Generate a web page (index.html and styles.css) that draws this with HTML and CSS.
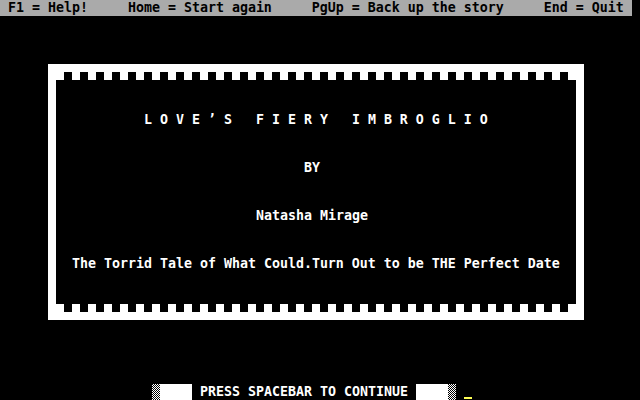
FILE: index.html
```html
<!DOCTYPE html>
<html lang="en">
<head>
<meta charset="utf-8">
<title>Love's Fiery Imbroglio</title>
<link rel="stylesheet" href="styles.css">
</head>
<body>
<div class="screen">
  <div class="bar">F1 = Help!     Home = Start again     PgUp = Back up the story     End = Quit</div>
  <div class="frame">
    <div class="teeth"></div>
    <div class="story">
      <p class="line title">L O V E ’ S   F I E R Y   I M B R O G L I O</p>
      <p class="line by">BY</p>
      <p class="line author">Natasha Mirage</p>
      <p class="line tagline">The Torrid Tale of What Could.Turn Out to be THE Perfect Date</p>
    </div>
    <div class="teeth"></div>
  </div>
  <div class="prompt">
    <span class="shade"></span><span class="block"></span><span class="msg"> PRESS SPACEBAR TO CONTINUE </span><span class="block"></span><span class="shade"></span><span class="cursor"></span>
  </div>
</div>
</body>
</html>
```
FILE: styles.css
```css
html, body {
  margin: 0;
  padding: 0;
  background: #000;
}

.screen {
  width: 640px;
  height: 400px;
  display: flex;
  flex-direction: column;
  background: #000;
  color: #fff;
  font-family: "DejaVu Sans Mono", "Liberation Mono", monospace;
  font-weight: bold;
  font-size: 13.29px;
  line-height: 16px;
  overflow: hidden;
}

.bar {
  width: 632px;
  height: 16px;
  box-sizing: border-box;
  padding-left: 8px;
  background: #aaaaaa;
  color: #000;
  white-space: pre;
}

.frame {
  box-sizing: border-box;
  width: 536px;
  height: 256px;
  margin: 48px 0 0 48px;
  border: 8px solid #fff;
  display: flex;
  flex-direction: column;
}

.teeth {
  flex: none;
  height: 8px;
  background: repeating-linear-gradient(to right, #fff 0 8px, #000 8px 16px);
}

.story {
  flex: 1;
  padding-top: 32px;
  display: flex;
  flex-direction: column;
  gap: 32px;
}

.line {
  margin: 0;
  height: 16px;
  white-space: pre;
}

.title { margin-left: 88px; }
.by { margin-left: 248px; }
.author { margin-left: 200px; }
.tagline { margin-left: 16px; }

.prompt {
  margin-top: auto;
  height: 16px;
  display: flex;
  padding-left: 152px;
  white-space: pre;
}

.shade {
  width: 8px;
  height: 16px;
  background-image: repeating-conic-gradient(#fff 0 25%, #000 0 50%);
  background-size: 2px 2px;
}

.block {
  width: 32px;
  height: 16px;
  background: #fff;
}

.msg {
  width: 224px;
}

.cursor {
  align-self: flex-end;
  width: 8px;
  height: 2px;
  margin: 0 0 1px 8px;
  background: #ffff55;
}
```
